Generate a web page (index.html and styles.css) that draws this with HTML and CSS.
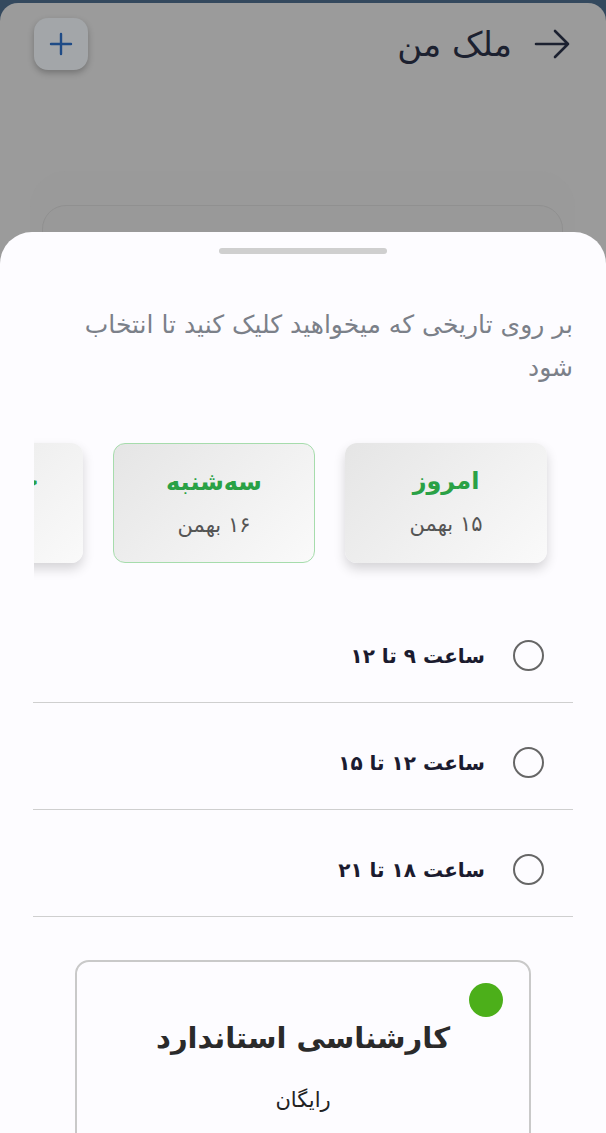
FILE: index.html
```html
<!DOCTYPE html>
<html lang="fa" dir="rtl">
<head>
  <meta charset="UTF-8">
  <title>ملک من</title>
  <link rel="stylesheet" href="styles.css">
</head>
<body>
  <div class="screen">
    <div class="backdrop">
      <div class="header">
        <div class="title-wrap">
          <svg class="back" width="36" height="30" viewBox="0 0 36 30">
            <path d="M2 15 H34 M21 2 L34 15 L21 28" fill="none" stroke="#1c2130" stroke-width="2.6" stroke-linecap="round" stroke-linejoin="round"/>
          </svg>
          <h1 class="title">ملک من</h1>
        </div>
        <button class="add-btn">
          <svg width="24" height="24" viewBox="0 0 24 24">
            <path d="M12 2 V22 M2 12 H22" stroke="#1f4b86" stroke-width="2.4" stroke-linecap="round"/>
          </svg>
        </button>
      </div>
      <div class="ghost-card"></div>
    </div>

    <div class="sheet">
      <div class="handle"></div>
      <p class="hint">بر روی تاریخی که میخواهید کلیک کنید تا انتخاب شود</p>

      <div class="days">
        <div class="day">
          <div class="day-name">امروز</div>
          <div class="day-date">۱۵ بهمن</div>
        </div>
        <div class="day selected">
          <div class="day-name">سه‌شنبه</div>
          <div class="day-date">۱۶ بهمن</div>
        </div>
        <div class="day">
          <div class="day-name">چهارشنبه</div>
          <div class="day-date">۱۷ بهمن</div>
        </div>
      </div>

      <div class="slots">
        <label class="slot"><span class="radio"></span><span class="slot-text">ساعت ۹ تا ۱۲</span></label>
        <label class="slot"><span class="radio"></span><span class="slot-text">ساعت ۱۲ تا ۱۵</span></label>
        <label class="slot"><span class="radio"></span><span class="slot-text">ساعت ۱۸ تا ۲۱</span></label>
      </div>

      <div class="plan">
        <span class="plan-dot"></span>
        <div class="plan-title">کارشناسی استاندارد</div>
        <div class="plan-price">رایگان</div>
      </div>
    </div>
  </div>
</body>
</html>
```

FILE: styles.css
```css
body { margin: 0; background: #34495e; font-family: "DejaVu Sans", sans-serif; }
.screen { margin-top: 3px; background: #9b9b9b; border-radius: 18px 18px 0 0; height: 1130px; overflow: hidden; }

.backdrop { height: 229px; overflow: hidden; }
.header { display: flex; justify-content: space-between; align-items: flex-start; padding: 15px 36px 0 34px; }
.title-wrap { display: flex; align-items: center; gap: 22px; margin-top: 6px; }
.back { display: block; }
.title { margin: 0; font-size: 34px; font-weight: normal; color: #1c2130; line-height: 40px; }
.add-btn { width: 54px; height: 52px; border: none; border-radius: 14px; background: #a3a6a9; box-shadow: 0 3px 6px rgba(0,0,0,0.25); display: flex; align-items: center; justify-content: center; padding: 0; }
.ghost-card { margin: 135px 43px 0 42px; height: 80px; border-radius: 24px; border: 1px solid #909090; background: #999; box-shadow: 0 -22px 0 12px #9a9a9a; }

.sheet { background: #fdfcff; border-radius: 32px 32px 0 0; padding: 16px 0 40px; height: 900px; }
.handle { width: 168px; height: 6px; border-radius: 3px; background: #cfcfcf; margin: 0 auto; }
.hint { margin: 49px 33px 0 70px; color: #7b8089; font-size: 25px; line-height: 43px; }

.days { display: flex; gap: 30px; margin: 44px 0 0 34px; padding: 10px 59px 20px 0; overflow: hidden; }
.day { flex: 0 0 202px; height: 120px; box-sizing: border-box; border-radius: 12px; background: linear-gradient(135deg, #e5e5e5, #fafafa); box-shadow: 0 6px 12px rgba(0,0,0,0.16); display: flex; flex-direction: column; align-items: center; }
.day.selected { border: 1.5px solid #a6dcac; box-shadow: none; }
.day-name { margin-top: 22px; font-size: 24px; font-weight: bold; color: #2aa146; line-height: 32px; }
.day-date { margin-top: 14px; font-size: 21px; color: #555; line-height: 26px; }

.slots { margin: 13px 33px 0; }
.slot { display: flex; align-items: center; gap: 28px; height: 107px; box-sizing: border-box; padding: 13px 29px 0 0; border-bottom: 1.5px solid #cfcfcf; }
.radio { width: 27px; height: 27px; border: 2.6px solid #666; border-radius: 50%; }
.slot-text { font-size: 20px; font-weight: bold; color: #1b1b2f; }

.plan { position: relative; margin: 43px 75px 0; border: 2px solid #c9c9c9; border-radius: 14px; height: 300px; text-align: center; }
.plan-dot { position: absolute; top: 21px; right: 26px; width: 34px; height: 34px; border-radius: 50%; background: #4caf1a; }
.plan-title { margin-top: 55px; font-size: 29px; font-weight: bold; color: #2a2a2a; line-height: 42px; }
.plan-price { margin-top: 26px; font-size: 21px; color: #222; line-height: 30px; }
```
